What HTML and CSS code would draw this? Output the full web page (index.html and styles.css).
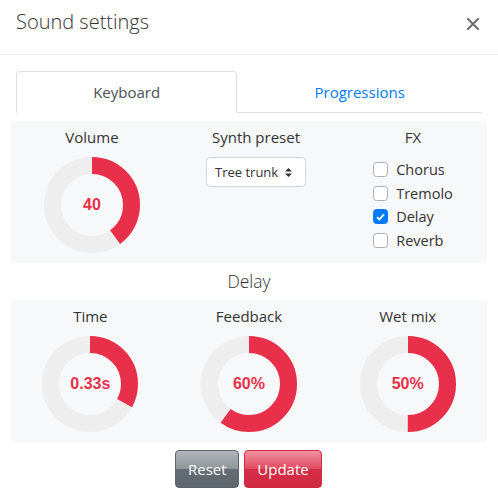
FILE: index.html
```html
<!DOCTYPE html>
<html lang="en">
<head>
<meta charset="utf-8">
<title>Sound settings</title>
<link rel="stylesheet" href="styles.css">
</head>
<body>
<div class="modal">
  <header class="modal-header">
    <h5 class="modal-title">Sound settings</h5>
    <button class="close" type="button" aria-label="Close">
      <svg width="12" height="12" viewBox="0 0 12 12"><path d="M1 1L11 11M11 1L1 11" stroke="#6e6e6e" stroke-width="2.1" stroke-linecap="square"/></svg>
    </button>
  </header>
  <div class="modal-body">
    <nav class="tabs">
      <a class="tab active">Keyboard</a>
      <a class="tab">Progressions</a>
    </nav>

    <section class="panel panel-main">
      <div class="col">
        <div class="label">Volume</div>
        <div class="knob">
          <svg width="96" height="96" viewBox="0 0 96 96">
            <circle cx="48" cy="48" r="39.5" fill="none" stroke="#eeeeee" stroke-width="17"/>
            <circle cx="48" cy="48" r="39.5" fill="none" stroke="#e8304a" stroke-width="17" stroke-dasharray="99.27 248.19" transform="rotate(-90 48 48)"/>
          </svg>
          <span class="knob-value">40</span>
        </div>
      </div>
      <div class="col">
        <div class="label">Synth preset</div>
        <div class="select">
          <span>Tree trunk</span>
          <svg width="7" height="9" viewBox="0 0 7 9"><path d="M0 3.6L3.5 0L7 3.6ZM0 5.4L7 5.4L3.5 9Z" fill="#333"/></svg>
        </div>
      </div>
      <div class="col">
        <div class="label">FX</div>
        <ul class="checks">
          <li><span class="box"></span>Chorus</li>
          <li><span class="box"></span>Tremolo</li>
          <li><span class="box checked"><svg width="9" height="8" viewBox="0 0 9 8"><path d="M1 4.2L3.4 6.4L8 1.4" fill="none" stroke="#fff" stroke-width="1.8"/></svg></span>Delay</li>
          <li><span class="box"></span>Reverb</li>
        </ul>
      </div>
    </section>

    <h6 class="section-title">Delay</h6>

    <section class="panel panel-delay">
      <div class="col">
        <div class="label">Time</div>
        <div class="knob">
          <svg width="96" height="96" viewBox="0 0 96 96">
            <circle cx="48" cy="48" r="39.5" fill="none" stroke="#eeeeee" stroke-width="17"/>
            <circle cx="48" cy="48" r="39.5" fill="none" stroke="#e8304a" stroke-width="17" stroke-dasharray="81.9 248.19" transform="rotate(-90 48 48)"/>
          </svg>
          <span class="knob-value">0.33s</span>
        </div>
      </div>
      <div class="col">
        <div class="label">Feedback</div>
        <div class="knob">
          <svg width="96" height="96" viewBox="0 0 96 96">
            <circle cx="48" cy="48" r="39.5" fill="none" stroke="#eeeeee" stroke-width="17"/>
            <circle cx="48" cy="48" r="39.5" fill="none" stroke="#e8304a" stroke-width="17" stroke-dasharray="148.91 248.19" transform="rotate(-90 48 48)"/>
          </svg>
          <span class="knob-value">60%</span>
        </div>
      </div>
      <div class="col">
        <div class="label">Wet mix</div>
        <div class="knob">
          <svg width="96" height="96" viewBox="0 0 96 96">
            <circle cx="48" cy="48" r="39.5" fill="none" stroke="#eeeeee" stroke-width="17"/>
            <circle cx="48" cy="48" r="39.5" fill="none" stroke="#e8304a" stroke-width="17" stroke-dasharray="124.1 248.19" transform="rotate(-90 48 48)"/>
          </svg>
          <span class="knob-value">50%</span>
        </div>
      </div>
    </section>

    <div class="actions">
      <button class="btn btn-reset" type="button">Reset</button>
      <button class="btn btn-update" type="button">Update</button>
    </div>
  </div>
</div>
</body>
</html>
```
FILE: styles.css
```css
* { box-sizing: border-box; }
html, body { margin: 0; padding: 0; background: #fff; }
body {
  font-family: "Open Sans", "Liberation Sans", sans-serif;
  color: #333;
}
.modal { width: 498px; }

.modal-header {
  display: flex;
  align-items: flex-start;
  justify-content: space-between;
  padding: 7px 16px 17px 16px;
  border-bottom: 1px solid #e9ecef;
}
.modal-title {
  margin: 0;
  font-size: 20px;
  line-height: 30px;
  font-weight: 300;
  color: #333;
}
.close {
  border: 0;
  background: none;
  padding: 0;
  margin: 11px 3px 0 0;
  width: 12px;
  height: 12px;
  display: flex;
}

.modal-body { padding: 16px 16px 0 16px; }

.tabs {
  display: flex;
  border-bottom: 1px solid #dee2e6;
}
.tab {
  flex: 1 1 auto;
  text-align: center;
  padding: 8px 16px;
  font-size: 15px;
  line-height: 24px;
  border: 1px solid transparent;
  border-radius: 4px 4px 0 0;
  margin-bottom: -1px;
  color: #007bff;
}
.tab.active {
  color: #495057;
  background: #fff;
  border-color: #dee2e6 #dee2e6 #fff;
}

.panel {
  margin: 8px -5px 0 -5px;
  background: #f7f8fa;
  border-radius: 4px;
  padding: 5px 0 10px 0;
  display: grid;
}
.panel-main { grid-template-columns: 162px 166px 148px; }
.panel-delay { grid-template-columns: 1fr 1fr 1fr; margin-top: 7px; }

.col {
  display: flex;
  flex-direction: column;
  align-items: center;
}
.label {
  font-size: 15px;
  line-height: 22px;
  color: #333;
}

.knob {
  position: relative;
  width: 96px;
  height: 96px;
  margin-top: 9px;
}
.knob svg { display: block; }
.knob-value {
  position: absolute;
  left: 0;
  right: 0;
  top: 0;
  bottom: 0;
  display: flex;
  align-items: center;
  justify-content: center;
  font-family: "Liberation Sans", Arial, sans-serif;
  font-weight: 700;
  font-size: 16px;
  color: #e8304a;
}

.select {
  margin-top: 9px;
  width: 100px;
  height: 30px;
  border: 1px solid #ced4da;
  border-radius: 4px;
  background: #fff;
  display: flex;
  align-items: center;
  justify-content: space-between;
  padding: 0 13px 0 8px;
  font-size: 13px;
  color: #333;
}
.select svg { display: block; }

.checks {
  list-style: none;
  margin: 10px 0 0 0;
  padding: 0;
}
.checks li {
  display: flex;
  align-items: center;
  height: 23.6px;
  font-size: 14.5px;
  color: #333;
}
.box {
  width: 15px;
  height: 15px;
  border: 1px solid #a8aeb4;
  border-radius: 3.5px;
  background: #fff;
  margin-right: 8px;
  display: flex;
  align-items: center;
  justify-content: center;
}
.box.checked {
  background: #007bff;
  border-color: #007bff;
}
.box svg { display: block; }

.section-title {
  margin: 6px 0 0 0;
  text-align: center;
  font-size: 17.5px;
  line-height: 24px;
  font-weight: 300;
  color: #333;
}

.actions {
  display: flex;
  justify-content: center;
  gap: 5px;
  margin-top: 8px;
  padding-right: 1px;
}
.btn {
  font-family: "Open Sans", "Liberation Sans", sans-serif;
  font-size: 15px;
  color: #fff;
  height: 38px;
  padding: 0 12px;
  border-radius: 4px;
  border: 1px solid;
  cursor: pointer;
}
.btn-reset {
  width: 64px;
  border-color: #5c646b;
  background: linear-gradient(to bottom, #b2b6ba 0%, #8f959a 50%, #656d74 50%, #5f676e 100%);
}
.btn-update {
  width: 78px;
  border-color: #d02a42;
  background: linear-gradient(to bottom, #f0919e 0%, #e14a60 50%, #d62d46 50%, #d02a42 100%);
}
```
